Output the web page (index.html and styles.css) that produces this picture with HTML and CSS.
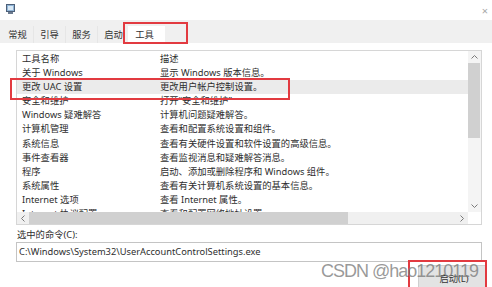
FILE: index.html
```html
<!DOCTYPE html>
<html lang="zh-CN">
<head>
  <meta charset="UTF-8">
  <meta name="viewport" content="width=device-width, initial-scale=1.0">
  <title>系统配置 - 工具</title>
  <link rel="stylesheet" href="styles.css">
</head>
<body>
  <div class="window">
    <header class="titlebar">
      <svg class="app-icon" width="9" height="10" viewBox="0 0 9 10">
        <rect x="0.5" y="0.5" width="8" height="7" fill="#8fb4d6" stroke="#4d5f78"/>
        <rect x="2" y="2" width="5" height="4" fill="#d8e8f5"/>
        <rect x="2" y="8" width="5" height="2" fill="#6b7a8f"/>
      </svg>
      <span class="close">×</span>
    </header>

    <nav class="tabs">
      <span class="tab">常规</span>
      <span class="tab">引导</span>
      <span class="tab">服务</span>
      <span class="tab">启动</span>
      <span class="tab active">工具</span>
    </nav>

    <main class="panel">
      <div class="listbox">
        <div class="rows">
          <div class="row head"><span>工具名称</span><span>描述</span></div>
          <div class="row"><span>关于 Windows</span><span>显示 Windows 版本信息。</span></div>
          <div class="row selected"><span>更改 UAC 设置</span><span>更改用户帐户控制设置。</span></div>
          <div class="row"><span>安全和维护</span><span>打开“安全和维护”</span></div>
          <div class="row"><span>Windows 疑难解答</span><span>计算机问题疑难解答。</span></div>
          <div class="row"><span>计算机管理</span><span>查看和配置系统设置和组件。</span></div>
          <div class="row"><span>系统信息</span><span>查看有关硬件设置和软件设置的高级信息。</span></div>
          <div class="row"><span>事件查看器</span><span>查看监视消息和疑难解答消息。</span></div>
          <div class="row"><span>程序</span><span>启动、添加或删除程序和 Windows 组件。</span></div>
          <div class="row"><span>系统属性</span><span>查看有关计算机系统设置的基本信息。</span></div>
          <div class="row"><span>Internet 选项</span><span>查看 Internet 属性。</span></div>
          <div class="row"><span>Internet 协议配置</span><span>查看和配置网络地址设置。</span></div>
        </div>

        <div class="vscroll">
          <span class="arrow">
            <svg width="7" height="4" viewBox="0 0 7 4"><path d="M0.5 3.5 L3.5 0.5 L6.5 3.5" fill="none" stroke="#7a7a7a"/></svg>
          </span>
          <span class="vthumb"></span>
          <span class="vtrack"></span>
          <span class="arrow">
            <svg width="7" height="4" viewBox="0 0 7 4"><path d="M0.5 0.5 L3.5 3.5 L6.5 0.5" fill="none" stroke="#7a7a7a"/></svg>
          </span>
        </div>

        <div class="hscroll">
          <span class="arrow">
            <svg width="4" height="7" viewBox="0 0 4 7"><path d="M3.5 0.5 L0.5 3.5 L3.5 6.5" fill="none" stroke="#7a7a7a"/></svg>
          </span>
          <span class="hthumb"></span>
          <span class="htrack"></span>
          <span class="arrow">
            <svg width="4" height="7" viewBox="0 0 4 7"><path d="M0.5 0.5 L3.5 3.5 L0.5 6.5" fill="none" stroke="#7a7a7a"/></svg>
          </span>
        </div>
        <div class="corner"></div>
      </div>

      <div class="cmd-label">选中的命令(C):</div>
      <div class="cmd-box">C:\Windows\System32\UserAccountControlSettings.exe</div>

      <div class="actions">
        <button class="btn">启动(L)</button>
      </div>
    </main>

    <!-- annotation boxes drawn over the screenshot -->
    <div class="mark mark-tab"></div>
    <div class="mark mark-row"></div>
    <div class="mark mark-btn"></div>

    <div class="watermark">CSDN @hao1210119</div>
  </div>
</body>
</html>
```

FILE: styles.css
```css
body {
  margin: 0;
  padding: 0;
  background: #fff;
  font-family: 'Noto Sans', 'Noto Sans CJK SC', sans-serif;
  font-size: 9.3px;
  color: #2e2e2e;
}
.window {
  position: relative;
  width: 492px;
  height: 287px;
  overflow: hidden;
  background: #fff;
}
.titlebar {
  height: 20px;
  display: flex;
  align-items: center;
  justify-content: space-between;
  padding: 0 4px 0 6px;
}
.app-icon {
  margin-top: -2px;
}
.close {
  color: #a8a8a8;
  font-size: 11px;
  line-height: 1;
}
.tabs {
  height: 23px;
  background: #f0f0f0;
  display: flex;
  align-items: flex-end;
  padding-left: 2px;
}
.tab {
  width: 32px;
  height: 17px;
  line-height: 17px;
  text-align: center;
  color: #333;
  border-right: 1px solid #e6e6e6;
  box-sizing: border-box;
}
.tab.active {
  width: 37px;
  margin-left: -2px;
  padding-right: 4px;
  background: #fff;
  border-right: none;
}
.panel {
  padding: 7px 10px 0 16px;
}
.listbox {
  height: 175px;
  border: 1px solid #d6d6d6;
  box-sizing: border-box;
  display: grid;
  grid-template-columns: 1fr 13px;
  grid-template-rows: 1fr 12px;
}
.rows {
  overflow: hidden;
  padding-top: 1px;
}
.row {
  display: grid;
  grid-template-columns: 138px 1fr;
  height: 14.1px;
  line-height: 14.1px;
  padding-left: 5px;
  white-space: nowrap;
}
.row.selected {
  background: #ebebeb;
}
.vscroll {
  display: flex;
  flex-direction: column;
  background: #f4f4f4;
}
.vscroll .arrow {
  height: 12px;
  display: flex;
  align-items: center;
  justify-content: center;
}
.vthumb {
  height: 75px;
  margin: 0 1px 0 0;
  background: #d0d0d0;
}
.vtrack {
  flex: 1;
}
.hscroll {
  display: flex;
  background: #f0f0f0;
}
.hscroll .arrow {
  width: 12px;
  display: flex;
  align-items: center;
  justify-content: center;
}
.hthumb {
  width: 319px;
  background: #d0d0d0;
}
.htrack {
  flex: 1;
}
.corner {
  background: #fff;
}
.cmd-label {
  height: 14px;
  line-height: 14px;
  margin-top: 3px;
  padding-left: 1px;
}
.cmd-box {
  height: 20px;
  line-height: 18px;
  border: 1px solid #c4c4c4;
  box-sizing: border-box;
  padding-left: 2px;
  white-space: nowrap;
  overflow: hidden;
}
.actions {
  display: flex;
  justify-content: flex-end;
  margin-top: 3px;
  margin-right: -4px;
}
.btn {
  width: 68px;
  height: 26px;
  padding: 0 0 0 4px;
  border: 1px solid #cfcfcf;
  background: #e3e3e3;
  font-family: inherit;
  font-size: 9.3px;
  color: #333;
}
.mark {
  position: absolute;
  border: 2px solid #e23a40;
  box-sizing: border-box;
}
.mark-tab {
  left: 123px;
  top: 22px;
  width: 65px;
  height: 22px;
}
.mark-row {
  left: 10px;
  top: 78px;
  width: 280px;
  height: 22px;
}
.mark-btn {
  left: 408px;
  top: 260px;
  width: 79px;
  height: 30px;
}
.watermark {
  position: absolute;
  left: 321px;
  top: 261px;
  font-family: 'Liberation Sans', sans-serif;
  font-size: 18px;
  letter-spacing: -1px;
  color: rgba(120, 120, 120, 0.75);
}
```
